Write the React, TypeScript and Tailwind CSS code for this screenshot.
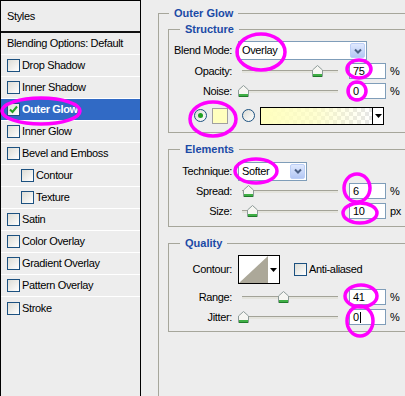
import React from "react";

const effects = [
  { label: "Drop Shadow" },
  { label: "Inner Shadow" },
  { label: "Outer Glow", active: true },
  { label: "Inner Glow" },
  { label: "Bevel and Emboss" },
  { label: "Contour", indent: true },
  { label: "Texture", indent: true },
  { label: "Satin" },
  { label: "Color Overlay" },
  { label: "Gradient Overlay" },
  { label: "Pattern Overlay" },
  { label: "Stroke" },
];

function Check({ checked }: { checked?: boolean }) {
  return (
    <div className="flex h-[13px] w-[13px] shrink-0 items-center justify-center border border-[#1c5180] bg-gradient-to-br from-[#dcdcd5] to-white">
      {checked && (
        <svg width="9" height="9" viewBox="0 0 9 9">
          <path d="M1 4.5 L3.5 7 L8 1.5" stroke="#21a121" strokeWidth="2" fill="none" />
        </svg>
      )}
    </div>
  );
}

function Radio({ checked }: { checked?: boolean }) {
  return (
    <div className="flex h-[13px] w-[13px] shrink-0 items-center justify-center rounded-full border border-[#1c5180] bg-gradient-to-br from-[#dcdcd5] to-white">
      {checked && <div className="h-[5px] w-[5px] rounded-full bg-[#21a121]" />}
    </div>
  );
}

function Select({ value, w }: { value: string; w: string }) {
  return (
    <div className={`flex h-[19px] items-center border border-[#7f9db9] bg-white pl-[3px] ${w}`}>
      <span className="flex-1">{value}</span>
      <div className="mr-px flex h-[15px] w-[15px] items-center justify-center rounded-[2px] border border-[#bccff7] bg-gradient-to-b from-[#e0e9fe] to-[#b3c7f4]">
        <svg width="8" height="6" viewBox="0 0 8 6">
          <path d="M1 1.5 L4 4.5 L7 1.5" stroke="#4d6185" strokeWidth="2" fill="none" />
        </svg>
      </div>
    </div>
  );
}

function Slider({ pos }: { pos: number }) {
  // pos = thumb centre in page pixels, slider starts at x=238
  return (
    <div className="relative h-full w-[105px]">
      <div className="absolute left-[4px] top-[9px] h-[3px] w-[96px] border-t border-[#a3a398] bg-[#e4e4dd]" />
      <svg
        className="absolute top-[4px]"
        style={{ left: pos - 238 - 5 }}
        width="11"
        height="12"
        viewBox="0 0 11 12"
      >
        <path d="M0.5 5 L5.5 0.5 L10.5 5 L10.5 11.5 L0.5 11.5 Z" fill="#f6f6f2" stroke="#8d9a98" />
        <rect x="1" y="9" width="9" height="2" fill="#3fae45" />
        <rect x="1" y="11" width="9" height="1" fill="#1f7a2a" />
      </svg>
    </div>
  );
}

function Field({ value, unit, caret }: { value: string; unit: string; caret?: boolean }) {
  return (
    <>
      <div className="ml-[6px] flex h-[16px] w-[37px] items-center border border-[#7f9db9] bg-white pl-[3px]">
        {value}
        {caret && <span className="ml-px h-[11px] w-px bg-black" />}
      </div>
      <span className="ml-[4px]">{unit}</span>
    </>
  );
}

function Row({ label, className, children }: { label: string; className: string; children: React.ReactNode }) {
  return (
    <div className={`flex items-center ${className}`}>
      <span className="w-[63px] shrink-0 text-right">{label}</span>
      <div className="ml-[6px] flex h-full items-center">{children}</div>
    </div>
  );
}

function SliderRow({ label, pos, value, unit, caret }: { label: string; pos: number; value: string; unit: string; caret?: boolean }) {
  return (
    <Row label={label} className="h-[20px]">
      <Slider pos={pos} />
      <Field value={value} unit={unit} caret={caret} />
    </Row>
  );
}

function Legend({ children, outer }: { children: React.ReactNode; outer?: boolean }) {
  return (
    <legend className={`px-[5px] font-bold leading-[14px] tracking-normal text-[#1b4aa6] ${outer ? "ml-[1px]" : "ml-[11px]"}`}>
      {children}
    </legend>
  );
}

export default function App() {
  return (
    <div className="relative flex h-[396px] w-[405px] overflow-hidden bg-[#ededed] font-['Liberation_Sans',Arial,sans-serif] text-[11px] tracking-[-0.35px] text-black">
      {/* styles list */}
      <div className="flex h-full w-[141px] shrink-0 flex-col border-x border-t border-black">
        <div className="flex h-[32px] shrink-0 items-center border-b-2 border-[#111] pl-[6px]">Styles</div>
        <div className="flex h-[22px] shrink-0 items-center border-b border-white pl-[6px]">Blending Options: Default</div>
        {effects.map((e, i) => (
          <div
            key={e.label}
            className={`flex h-[22px] shrink-0 items-center gap-[2px] ${i < effects.length - 1 ? "border-b border-white" : ""} ${
              e.indent ? "pl-[20px]" : "pl-[6px]"
            } ${e.active ? "bg-[#316ac5] font-bold text-white" : ""}`}
          >
            <Check checked={e.active} />
            <span>{e.label}</span>
          </div>
        ))}
      </div>

      {/* outer glow panel */}
      <div className="flex-1">
        <fieldset className="ml-[17px] mt-[6px] min-h-[420px] w-[260px] border-l border-t border-[#a6a69b] pl-[9px]">
          <Legend outer>Outer Glow</Legend>

          <fieldset className="mt-[2px] w-[260px] border border-[#a6a69b] pb-[7px]">
            <Legend>Structure</Legend>
            <Row label="Blend Mode:" className="mt-[4px] h-[21px]">
              <Select value="Overlay" w="w-[129px]" />
            </Row>
            <SliderRow label="Opacity:" pos={317} value="75" unit="%" />
            <SliderRow label="Noise:" pos={243} value="0" unit="%" />
            <div className="mt-[5px] flex h-[19px] items-center pl-[25px]">
              <Radio checked />
              <div className="ml-[5px] h-[16px] w-[16px] border border-[#a0a0a0] bg-[#ffffbe]" />
              <div className="ml-[14px]">
                <Radio />
              </div>
              <div className="ml-[5px] flex h-[18px] w-[124px] border border-black bg-[repeating-conic-gradient(#e6e6e6_0%_25%,#ffffff_0%_50%)] bg-[length:8px_8px]">
                <div className="flex-1 bg-gradient-to-r from-[#ffffbe] via-[#ffffbe]/70 to-transparent" />
                <div className="flex w-[11px] items-center justify-center border-l border-black bg-white">
                  <svg width="7" height="4" viewBox="0 0 7 4">
                    <path d="M0 0 H7 L3.5 4 Z" fill="#000" />
                  </svg>
                </div>
              </div>
            </div>
          </fieldset>

          <fieldset className="mt-[9px] w-[260px] border border-[#a6a69b] pb-[5px]">
            <Legend>Elements</Legend>
            <Row label="Technique:" className="mt-[5px] h-[20px]">
              <Select value="Softer" w="w-[69px]" />
            </Row>
            <SliderRow label="Spread:" pos={248} value="6" unit="%" />
            <SliderRow label="Size:" pos={252} value="10" unit="px" />
          </fieldset>

          <fieldset className="mt-[9px] w-[260px] border border-[#a6a69b] pb-[4px]">
            <Legend>Quality</Legend>
            <Row label="Contour:" className="mt-[5px] h-[29px]">
              <div className="flex h-[29px] w-[42px] border border-black bg-white">
                <svg width="29" height="27" viewBox="0 0 29 27">
                  <path d="M0 27 L29 0 L29 27 Z" fill="#aca899" />
                </svg>
                <div className="flex flex-1 items-center justify-center">
                  <svg width="7" height="4" viewBox="0 0 7 4">
                    <path d="M0 0 H7 L3.5 4 Z" fill="#000" />
                  </svg>
                </div>
              </div>
              <div className="ml-[14px]">
                <Check />
              </div>
              <span className="ml-[2px]">Anti-aliased</span>
            </Row>
            <div className="mt-[3px]" />
            <SliderRow label="Range:" pos={283} value="41" unit="%" />
            <SliderRow label="Jitter:" pos={243} value="0" unit="%" caret />
          </fieldset>
        </fieldset>
      </div>

      {/* hand-drawn annotations */}
      <svg className="pointer-events-none absolute left-0 top-0" width="405" height="396" viewBox="0 0 405 396">
        <g fill="none" stroke="#ff00ff" strokeWidth="3.5">
          <ellipse cx="41" cy="111" rx="39" ry="13" />
          <ellipse cx="261" cy="52" rx="24" ry="18" />
          <ellipse cx="359" cy="69" rx="12" ry="9" />
          <ellipse cx="357" cy="91" rx="9" ry="9" />
          <ellipse cx="213" cy="119" rx="23" ry="17" />
          <ellipse cx="256" cy="171" rx="21" ry="12" />
          <ellipse cx="357" cy="188" rx="13" ry="14" />
          <ellipse cx="360" cy="213" rx="17" ry="10" />
          <ellipse cx="361" cy="296" rx="16" ry="11" />
          <ellipse cx="360" cy="321" rx="13" ry="15" />
        </g>
      </svg>
    </div>
  );
}
